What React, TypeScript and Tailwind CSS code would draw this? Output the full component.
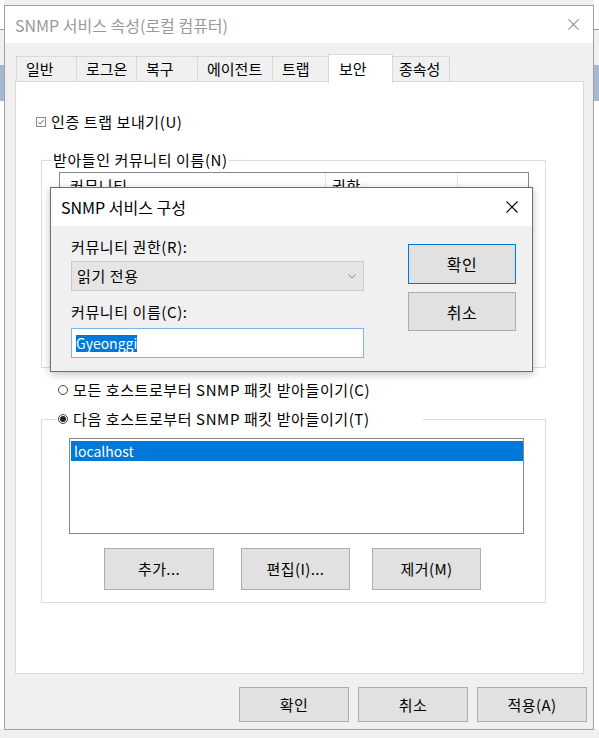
import React from "react";

const tabs = [
  { label: "일반", w: "w-[60px]" },
  { label: "로그온", w: "w-[60px]" },
  { label: "복구", w: "w-[61px]" },
  { label: "에이전트", w: "w-[75px]" },
  { label: "트랩", w: "w-[56px]" },
];

const CloseIcon = ({ className }: { className: string }) => (
  <svg viewBox="0 0 12 12" className={className} fill="none">
    <path d="M0.5 0.5 L11.5 11.5 M11.5 0.5 L0.5 11.5" stroke="currentColor" strokeWidth="1.1" />
  </svg>
);

const Radio = ({ checked }: { checked?: boolean }) => (
  <span className="flex h-[10px] w-[10px] shrink-0 items-center justify-center rounded-full border border-[#444] bg-white">
    {checked && <span className="h-[6px] w-[6px] rounded-full bg-[#222]" />}
  </span>
);

const WinButton = ({ label, className }: { label: string; className: string }) => (
  <div
    className={`flex items-center justify-center border border-[#adadad] bg-[#e1e1e1] text-[15px] leading-[20px] tracking-[0.4px] ${className}`}
  >
    {label}
  </div>
);

const EdgeStrip = ({ w }: { w: string }) => (
  <div className={`flex h-full flex-col ${w}`}>
    <div className="h-[29px] bg-white" />
    <div className="h-px bg-[#a0a0a0]" />
    <div className="h-[35px] bg-[#f0f0f0]" />
    <div className="h-[36px] bg-[#a6b8d3]" />
    <div className="flex-1 bg-white" />
    <div className="h-[9px] bg-[#f0f0f0]" />
  </div>
);

export default function App() {
  return (
    <div className="relative flex h-[738px] w-[599px] overflow-hidden bg-[#f0f0f0] font-['Noto_Sans_CJK_KR',sans-serif] text-black">
      <EdgeStrip w="w-[4px]" />

      {/* property sheet */}
      <div className="mt-[5px] flex h-[725px] w-[590px] flex-col border border-[#a0a0a0] bg-[#f0f0f0]">
        <div className="flex h-[37px] items-center justify-between bg-white pl-[10px] pr-[14px]">
          <span className="text-[16px] leading-[20px] text-[#999999]">SNMP 서비스 속성(로컬 컴퓨터)</span>
          <CloseIcon className="h-[11px] w-[11px] text-[#8c8c8c]" />
        </div>

        <div className="pl-[10px]">
          <div className="mt-[11px] flex h-[27px] items-end pl-[1px]">
            {tabs.map((t) => (
              <div
                key={t.label}
                className={`flex h-[25px] items-center whitespace-nowrap border-l border-t border-[#d9d9d9] pl-[9px] text-[15px] leading-[20px] ${t.w}`}
              >
                {t.label}
              </div>
            ))}
            <div className="relative z-10 -mb-[2px] flex h-[29px] w-[65px] items-start border-x border-t border-[#d9d9d9] bg-white pl-[10px] pt-[4px] text-[15px] leading-[20px]">
              보안
            </div>
            <div className="flex h-[25px] w-[57px] items-center whitespace-nowrap border-r border-t border-[#d9d9d9] pl-[6px] text-[15px] leading-[20px]">
              종속성
            </div>
          </div>

          <div className="flex h-[593px] w-[569px] flex-col border border-[#d9d9d9] bg-white text-[15px] leading-[20px] tracking-[0.6px]">
            <div className="mt-[30px] flex h-[20px] items-center pl-[20px]">
              <span className="flex h-[10px] w-[10px] items-center justify-center border border-[#8a8a8a]">
                <svg viewBox="0 0 8 8" className="h-[8px] w-[8px]" fill="none">
                  <path d="M1.2 4.2 L3.2 6 L6.8 1.8" stroke="#707070" strokeWidth="1" />
                </svg>
              </span>
              <span className="ml-[5px]">인증 트랩 보내기(U)</span>
            </div>

            <fieldset className="ml-[25px] mt-[18px] h-[218px] w-[505px] border border-[#dcdcdc]">
              <legend className="ml-[10px] h-[20px] px-[1px] leading-[20px]">받아들인 커뮤니티 이름(N)</legend>
              <div className="ml-[17px] mt-[2px] h-[170px] w-[470px] border border-[#828790] bg-white">
                <div className="flex h-[26px] items-center">
                  <div className="h-full w-[266px] border-r border-[#e5e5e5] pl-[10px] leading-[26px]">커뮤니티</div>
                  <div className="h-full w-[132px] border-r border-[#e5e5e5] pl-[6px] leading-[26px]">권한</div>
                </div>
              </div>
            </fieldset>

            <div className="mt-[12px] flex h-[20px] items-center whitespace-nowrap pl-[42px]">
              <Radio />
              <span className="ml-[5px]">모든 호스트로부터 SNMP 패킷 받아들이기(C)</span>
            </div>

            <fieldset className="ml-[25px] mt-[9px] h-[194px] w-[505px] border border-[#dcdcdc]">
              <legend className="ml-[15px] flex h-[20px] w-[366px] items-center whitespace-nowrap pl-[1px]">
                <Radio checked />
                <span className="ml-[5px]">다음 호스트로부터 SNMP 패킷 받아들이기(T)</span>
              </legend>
              <div className="ml-[27px] mt-[9px] h-[96px] w-[455px] border border-[#828790] bg-white pt-[2px]">
                <div className="ml-px h-[20px] w-[452px] bg-[#0078d7] pl-[3px] text-[14px] leading-[20px] tracking-normal text-white">
                  localhost
                </div>
              </div>
              <div className="ml-[62px] mt-[14px] flex">
                <WinButton label="추가..." className="h-[42px] w-[110px]" />
                <WinButton label="편집(I)..." className="ml-[27px] h-[42px] w-[109px]" />
                <WinButton label="제거(M)" className="ml-[22px] h-[42px] w-[109px]" />
              </div>
            </fieldset>
          </div>
        </div>

        <div className="mt-[13px] flex justify-end gap-[9px] pr-[6px]">
          <WinButton label="확인" className="h-[35px] w-[110px]" />
          <WinButton label="취소" className="h-[35px] w-[110px]" />
          <WinButton label="적용(A)" className="h-[35px] w-[110px]" />
        </div>
      </div>

      <EdgeStrip w="w-[5px]" />

      {/* community config dialog on top */}
      <div className="absolute left-[50px] top-[187px] flex h-[185px] w-[483px] flex-col border border-[#6e6e6e] bg-[#f0f0f0] text-[15px] leading-[20px] tracking-[0.6px] shadow-[0_2px_8px_rgba(0,0,0,0.25)]">
        <div className="flex h-[38px] shrink-0 items-center justify-between bg-white pl-[10px] pr-[14px]">
          <span className="text-[16px] tracking-normal">SNMP 서비스 구성</span>
          <CloseIcon className="h-[12px] w-[12px] text-black" />
        </div>
        <div className="flex">
          <div className="ml-[20px] mt-[11px] flex w-[293px] flex-col">
            <div className="h-[20px]">커뮤니티 권한(R):</div>
            <div className="mt-[4px] flex h-[30px] items-center justify-between border border-[#cccccc] bg-[#e5e5e5] pl-[5px] pr-[7px]">
              <span>읽기 전용</span>
              <svg viewBox="0 0 8 5" className="h-[5px] w-[8px]" fill="none">
                <path d="M0.5 0.5 L4 4 L7.5 0.5" stroke="#888" strokeWidth="1" />
              </svg>
            </div>
            <div className="mt-[11px] h-[20px]">커뮤니티 이름(C):</div>
            <div className="mt-[6px] flex h-[30px] items-center border border-[#7eb4ea] bg-white pl-[4px]">
              <span className="h-[17px] bg-[#0078d7] text-[14px] leading-[17px] tracking-normal text-white">Gyeonggi</span>
            </div>
          </div>
          <div className="ml-[44px] mt-[18px] flex w-[108px] flex-col">
            <div className="flex h-[40px] items-center justify-center border border-[#0078d7] bg-[#e1e1e1] text-[16px]">확인</div>
            <div className="mt-[8px] flex h-[39px] items-center justify-center border border-[#adadad] bg-[#e1e1e1] text-[16px]">취소</div>
          </div>
        </div>
      </div>
    </div>
  );
}
